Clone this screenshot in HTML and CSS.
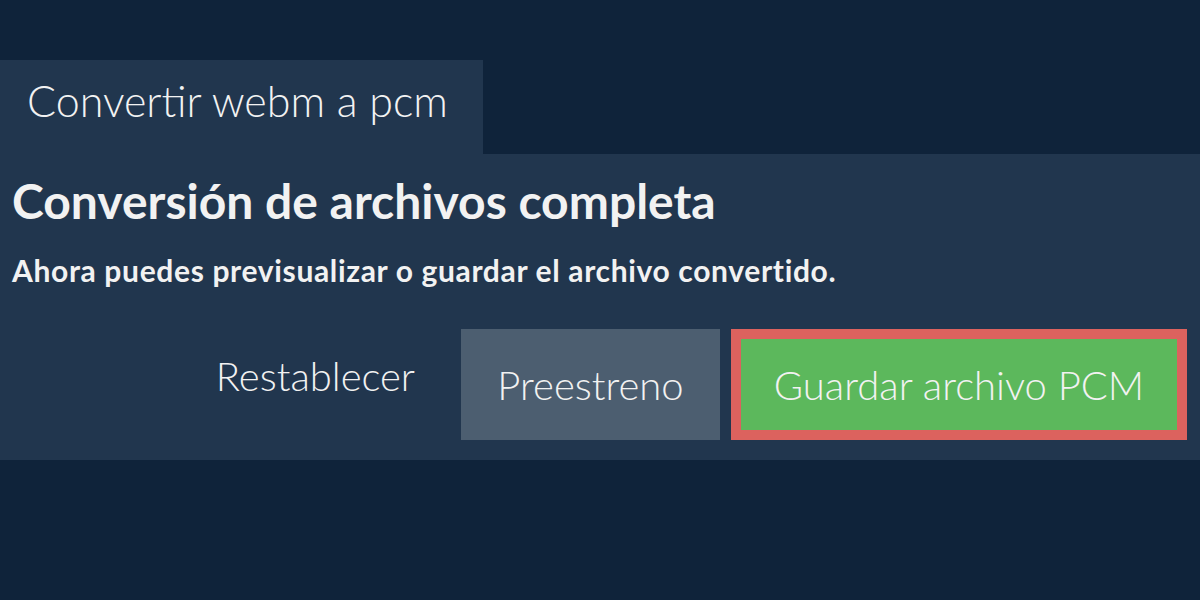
FILE: index.html
```html
<!DOCTYPE html>
<html lang="es">
<head>
    <meta charset="UTF-8">
    <meta name="viewport" content="width=device-width, initial-scale=1.0">
    <title>Convertir webm a pcm</title>
    <link rel="stylesheet" href="styles.css">
</head>
<body>
    <div class="tabs">
        <div class="tab">Convertir webm a pcm</div>
    </div>

    <section class="panel">
        <h1>Conversión de archivos completa</h1>
        <p class="hint">Ahora puedes previsualizar o guardar el archivo convertido.</p>

        <div class="actions">
            <a class="btn-reset" href="#">Restablecer</a>
            <button class="btn btn-preview" type="button">Preestreno</button>
            <button class="btn btn-save" type="button">Guardar archivo PCM</button>
        </div>
    </section>
</body>
</html>
```

FILE: styles.css
```css
body {
    font-family: Lato, "Open Sans", sans-serif;
    margin: 0;
    padding: 0;
    background-color: #0f233a;
    color: #f2f2f2;
}
.tabs {
    padding-top: 60px;
    display: flex;
}
.tab {
    background-color: #21364e;
    font-size: 43px;
    font-weight: 300;
    height: 94px;
    line-height: 81px;
    padding: 0 35px 0 27px;
}
.panel {
    background-color: #21364e;
    padding: 18px 13px 20px 12px;
}
h1 {
    margin: 0;
    font-size: 48px;
    font-weight: 700;
    line-height: 58px;
}
.hint {
    margin: 23px 0 0;
    font-size: 30px;
    font-weight: 700;
    letter-spacing: 0.65px;
    line-height: 34px;
}
.actions {
    display: flex;
    justify-content: flex-end;
    align-items: flex-start;
    gap: 11px;
    margin-top: 42px;
}
.btn-reset {
    color: #f2f2f2;
    text-decoration: none;
    font-size: 40px;
    font-weight: 300;
    line-height: 48px;
    padding: 23px 35px 0;
}
.btn {
    font-family: inherit;
    font-size: 40px;
    font-weight: 300;
    color: #f2f2f2;
    border: none;
    height: 111px;
    padding: 0;
    cursor: pointer;
}
.btn-preview {
    background-color: #4c5e70;
    width: 259px;
}
.btn-save {
    background-color: #5cb85c;
    border: 10px solid #dc625e;
    width: 456px;
}
```
